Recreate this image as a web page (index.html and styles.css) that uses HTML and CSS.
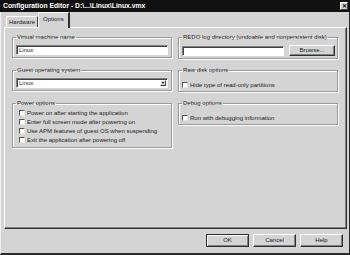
FILE: index.html
```html
<!DOCTYPE html>
<html>
<head>
<meta charset="utf-8">
<link rel="stylesheet" href="styles.css">
</head>
<body>
<div class="window">
  <div class="titlebar">
    <span class="title">Configuration Editor - D:\...\Linux\Linux.vmx</span>
    <span class="close">&#x2715;</span>
  </div>
  <div class="tabs">
    <div class="tab">Hardware</div>
    <div class="tab active">Options</div>
  </div>
  <div class="panel">
    <div class="grid">
      <fieldset class="group">
        <legend>Virtual machine name</legend>
        <input class="field" type="text" value="Linux">
      </fieldset>
      <fieldset class="group redo">
        <legend>REDO log directory (undoable and nonpersistent disk)</legend>
        <div class="row">
          <input class="field" type="text" value="">
          <div class="btn browse">Browse...</div>
        </div>
      </fieldset>
      <fieldset class="group">
        <legend>Guest operating system</legend>
        <div class="select">
          <span class="select-text">Linux</span>
          <span class="select-btn"><span class="arrow"></span></span>
        </div>
      </fieldset>
      <fieldset class="group checks">
        <legend>Raw disk options</legend>
        <div class="check"><span class="box"></span>Hide type of read-only partitions</div>
      </fieldset>
      <fieldset class="group checks tight left">
        <legend>Power options</legend>
        <div class="check"><span class="box"></span>Power on after starting the application</div>
        <div class="check"><span class="box"></span>Enter full screen mode after powering on</div>
        <div class="check"><span class="box"></span>Use APM features of guest OS when suspending</div>
        <div class="check"><span class="box"></span>Exit the application after powering off</div>
      </fieldset>
      <fieldset class="group checks">
        <legend>Debug options</legend>
        <div class="check"><span class="box"></span>Run with debugging information</div>
      </fieldset>
    </div>
  </div>
  <div class="buttons">
    <div class="btn dlg default">OK</div>
    <div class="btn dlg">Cancel</div>
    <div class="btn dlg">Help</div>
  </div>
</div>
</body>
</html>
```

FILE: styles.css
```css
html, body {
  margin: 0;
  padding: 0;
  background: #d4d4d4;
}
body {
  font-family: "Liberation Sans", Arial, sans-serif;
  font-size: 6px;
  color: #1a1a1a;
}
.window {
  width: 350px;
  height: 255px;
  box-sizing: border-box;
  border-left: 1px solid #f2f2f2;
  border-right: 1px solid #2a2a2a;
  border-bottom: 2px solid #2a2a2a;
  display: flex;
  flex-direction: column;
  background: #d4d4d4;
}
.titlebar {
  height: 12px;
  margin: 0 -1px;
  background: #111;
  color: #fff;
  display: flex;
  align-items: center;
  justify-content: space-between;
  padding: 0 2px 0 3px;
}
.title {
  font-weight: bold;
  font-size: 6.8px;
  line-height: 12px;
  white-space: nowrap;
}
.close {
  width: 8px;
  height: 8px;
  box-sizing: border-box;
  background: #d4d4d4;
  color: #000;
  border: 1px solid;
  border-color: #fff #404040 #404040 #fff;
  font-size: 6px;
  line-height: 6px;
  text-align: center;
  font-weight: bold;
}
.tabs {
  height: 15px;
  display: flex;
  align-items: flex-end;
  padding-left: 5px;
}
.tab {
  height: 11px;
  box-sizing: border-box;
  padding: 0 2px;
  border: 1px solid;
  border-color: #fff #404040 transparent #fff;
  border-bottom: none;
  line-height: 10px;
  white-space: nowrap;
}
.tab.active {
  height: 16px;
  margin-bottom: -1px;
  padding: 0 4px;
  line-height: 12px;
  background: #d4d4d4;
  border-right: 2px solid #303030;
  position: relative;
  z-index: 1;
}
.panel {
  height: 202px;
  box-sizing: border-box;
  margin: 0 2px 0 3px;
  border: 1px solid;
  border-color: #fff #303030 #303030 #fff;
  box-shadow: inset -1px -1px 0 #808080;
  padding: 6px 6px 0 7px;
}
.grid {
  display: grid;
  grid-template-columns: 160px 160px;
  column-gap: 6px;
  row-gap: 8px;
  align-items: start;
}
.group {
  margin: 0;
  min-width: 0;
  padding: 4px 3px 2px;
  border: 1px solid #999;
  box-shadow: 1px 1px 0 #fff, inset 1px 1px 0 #fff;
}
.group legend {
  padding: 0 1px;
  line-height: 7px;
  white-space: nowrap;
}
.redo {
  padding-right: 2px;
}
.field {
  display: block;
  width: 100%;
  height: 10px;
  box-sizing: border-box;
  margin: 0;
  padding: 0 2px;
  border: 1px solid;
  border-color: #808080 #fff #fff #808080;
  box-shadow: inset 1px 1px 0 #404040;
  background: #fff;
  font-family: "Liberation Sans", Arial, sans-serif;
  font-size: 6px;
  color: #1a1a1a;
  outline: none;
}
.row {
  display: flex;
  gap: 5px;
  align-items: center;
}
.row .field {
  flex: 1;
  width: auto;
  min-width: 0;
}
.btn {
  box-sizing: border-box;
  background: #d4d4d4;
  border: 1px solid;
  border-color: #fff #303030 #303030 #fff;
  box-shadow: inset -1px -1px 0 #808080;
  text-align: center;
  white-space: nowrap;
}
.browse {
  width: 46px;
  height: 11px;
  line-height: 9px;
}
.select {
  display: flex;
  height: 10px;
  box-sizing: border-box;
  border: 1px solid;
  border-color: #808080 #fff #fff #808080;
  box-shadow: inset 1px 1px 0 #404040;
  background: #fff;
  padding: 1px 1px 1px 2px;
}
.select-text {
  flex: 1;
  line-height: 7px;
}
.select-btn {
  width: 6px;
  box-sizing: border-box;
  background: #d4d4d4;
  border: 1px solid;
  border-color: #fff #404040 #404040 #fff;
  display: flex;
  align-items: center;
  justify-content: center;
}
.arrow {
  width: 0;
  height: 0;
  border-left: 1.5px solid transparent;
  border-right: 1.5px solid transparent;
  border-top: 2px solid #000;
}
.checks {
  padding: 6px 3px 2px;
}
.checks.tight {
  padding-top: 1px;
  padding-bottom: 3px;
}
.check {
  display: flex;
  align-items: center;
  height: 9px;
  gap: 2px;
  white-space: nowrap;
}
.left .check {
  padding-left: 3px;
}
.box {
  width: 6px;
  height: 6px;
  box-sizing: border-box;
  flex: none;
  background: #fff;
  border: 1px solid;
  border-color: #555 #e8e8e8 #e8e8e8 #555;
}
.buttons {
  display: flex;
  justify-content: flex-end;
  gap: 4px;
  margin-top: 5px;
  padding-right: 6px;
}
.dlg {
  width: 43px;
  height: 13px;
  line-height: 11px;
}
.dlg.default {
  border-color: #303030;
  box-shadow: inset 1px 1px 0 #fff, inset -1px -1px 0 #808080;
}
```
